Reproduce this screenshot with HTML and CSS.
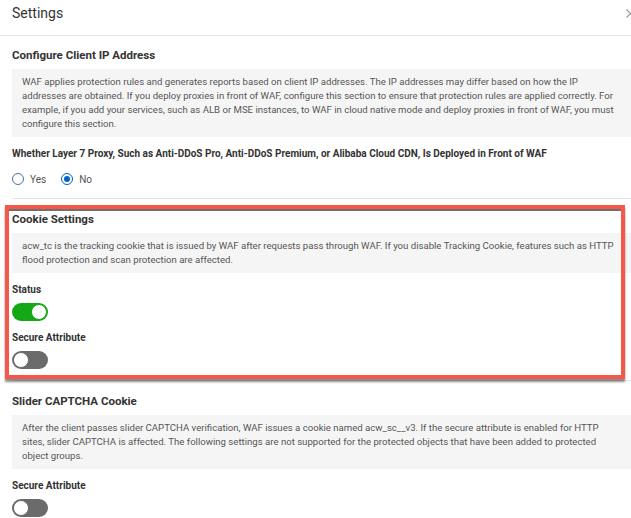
FILE: index.html
```html
<!DOCTYPE html>
<html lang="en">
<head>
<meta charset="utf-8">
<title>Settings</title>
<link rel="stylesheet" href="styles.css">
</head>
<body>
<div class="drawer">
  <header class="drawer-header">
    <h1 class="drawer-title">Settings</h1>
    <span class="close-icon" aria-label="Close">
      <svg width="9" height="9" viewBox="0 0 9 9"><path d="M0.5 0.5 L8.5 8.5 M8.5 0.5 L0.5 8.5" stroke="#9a9a9a" stroke-width="1.2" fill="none"/></svg>
    </span>
  </header>
  <div class="drawer-body">
    <section class="section first">
      <h2 class="section-title">Configure Client IP Address</h2>
      <div class="notice">WAF applies protection rules and generates reports based on client IP addresses. The IP addresses may differ based on how the IP addresses are obtained. If you deploy proxies in front of WAF, configure this section to ensure that protection rules are applied correctly. For example, if you add your services, such as ALB or MSE instances, to WAF in cloud native mode and deploy proxies in front of WAF, you must configure this section.</div>
      <div class="field">
        <div class="field-label">Whether Layer 7 Proxy, Such as Anti-DDoS Pro, Anti-DDoS Premium, or Alibaba Cloud CDN, Is Deployed in Front of WAF</div>
        <div class="radio-group">
          <label class="radio"><span class="radio-dot"></span>Yes</label>
          <label class="radio checked"><span class="radio-dot"></span>No</label>
        </div>
      </div>
    </section>
    <section class="section highlighted">
      <h2 class="section-title">Cookie Settings</h2>
      <div class="notice">acw_tc is the tracking cookie that is issued by WAF after requests pass through WAF. If you disable Tracking Cookie, features such as HTTP flood protection and scan protection are affected.</div>
      <div class="field">
        <div class="field-label">Status</div>
        <span class="switch on"><span class="knob"></span></span>
      </div>
      <div class="field">
        <div class="field-label">Secure Attribute</div>
        <span class="switch"><span class="knob"></span></span>
      </div>
    </section>
    <section class="section">
      <h2 class="section-title">Slider CAPTCHA Cookie</h2>
      <div class="notice">After the client passes slider CAPTCHA verification, WAF issues a cookie named acw_sc__v3. If the secure attribute is enabled for HTTP sites, slider CAPTCHA is affected. The following settings are not supported for the protected objects that have been added to protected object groups.</div>
      <div class="field">
        <div class="field-label">Secure Attribute</div>
        <span class="switch"><span class="knob"></span></span>
      </div>
    </section>
  </div>
</div>
</body>
</html>
```

FILE: styles.css
```css
html, body {
  margin: 0;
  padding: 0;
  overflow: hidden;
  background: #fff;
}

body {
  font-family: Roboto, "Liberation Sans", Arial, sans-serif;
  color: #333;
}

.drawer {
  width: 640px;
}

.drawer-header {
  height: 36px;
  box-sizing: border-box;
  border-bottom: 1px solid #e6e6e6;
  display: flex;
  justify-content: space-between;
  align-items: flex-start;
  padding: 3px 5px 0 12px;
}

.drawer-title {
  margin: 0;
  font-size: 14px;
  font-weight: 400;
  line-height: 20px;
  color: #333;
}

.close-icon {
  display: flex;
  margin-top: 6px;
}

.drawer-body {
  padding-left: 12px;
}

.section {
  padding: 11px 0 11px;
  border-bottom: 1px solid #e6e6e6;
  position: relative;
}

.section.first {
  padding-top: 10px;
}

.section-title {
  margin: 0;
  font-size: 11.5px;
  font-weight: 700;
  line-height: 18px;
  color: #333;
}

.notice {
  margin-top: 5px;
  background: #f5f5f5;
  padding: 6px 20px 6px 10px;
  font-size: 9.6px;
  line-height: 14px;
  color: #555;
}

.field {
  margin-top: 8px;
}

.field-label {
  font-size: 10px;
  font-weight: 700;
  line-height: 18px;
  color: #333;
}

.radio-group {
  display: flex;
  gap: 15px;
  margin-top: 8px;
  height: 16px;
  align-items: center;
}

.radio {
  display: flex;
  align-items: center;
  gap: 6px;
  font-size: 10px;
  color: #555;
}

.radio-dot {
  width: 10px;
  height: 10px;
  border: 1px solid #4f6f9a;
  border-radius: 50%;
  box-sizing: content-box;
  position: relative;
}

.radio.checked .radio-dot {
  border-color: #0064c8;
}

.radio.checked .radio-dot::after {
  content: "";
  position: absolute;
  left: 2px;
  top: 2px;
  width: 6px;
  height: 6px;
  border-radius: 50%;
  background: #0064c8;
}

.switch {
  display: flex;
  margin-top: 4px;
  width: 36px;
  height: 18px;
  border-radius: 9px;
  background: #6b6b6b;
  box-sizing: border-box;
  padding: 1px;
}

.switch .knob {
  width: 16px;
  height: 16px;
  box-sizing: border-box;
  border-radius: 50%;
  background: #fff;
  border: 1px solid #6b6b6b;
}

.switch.on {
  background: #14a814;
  justify-content: flex-end;
}

.switch.on .knob {
  border-color: #14a814;
}

.highlighted::after {
  content: "";
  position: absolute;
  top: 6px;
  left: -7px;
  right: 15px;
  bottom: 1px;
  border: 4px solid #f5574a;
  box-shadow: inset 0 2px 0 #6f6f6f, 0 3px 2px rgba(0, 0, 0, 0.45);
  pointer-events: none;
}
```
